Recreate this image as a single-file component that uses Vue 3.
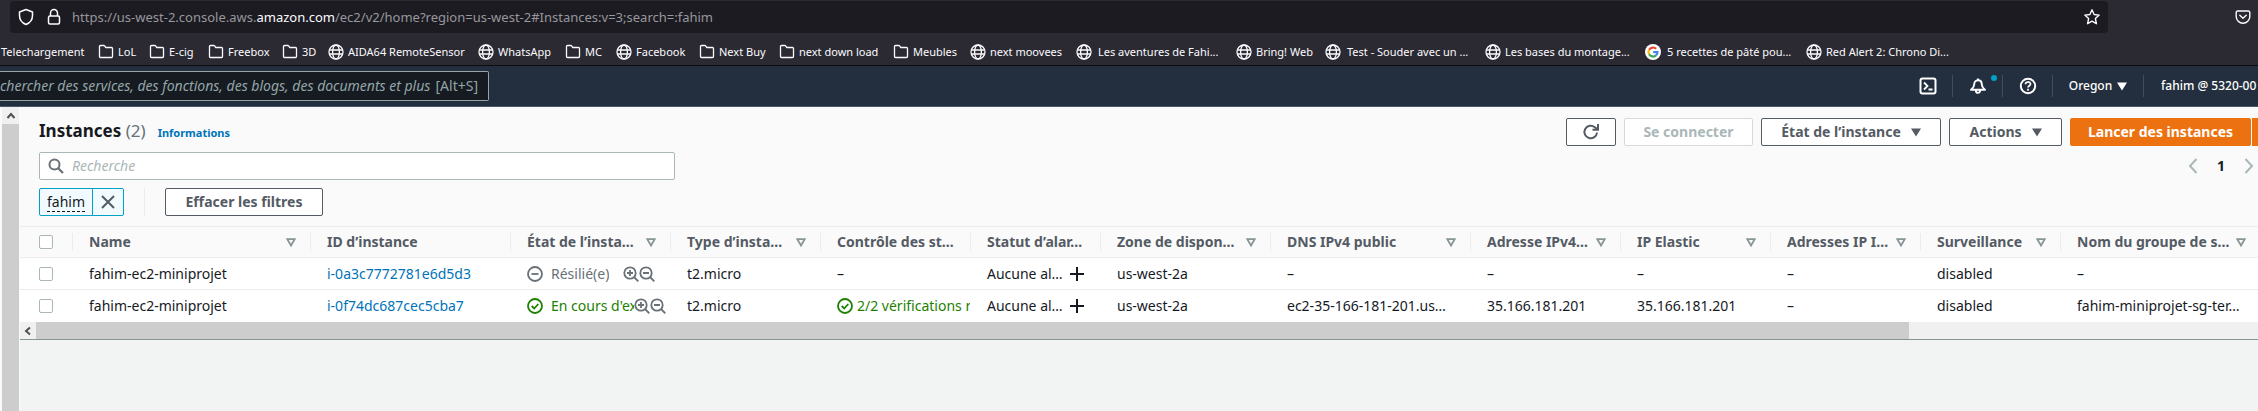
<script setup>
import { ref } from 'vue'

const bookmarks = [
  { label: 'Telechargement', icon: 'none', width: 97 },
  { label: 'LoL', icon: 'folder', width: 51 },
  { label: 'E-cig', icon: 'folder', width: 59 },
  { label: 'Freebox', icon: 'folder', width: 74 },
  { label: '3D', icon: 'folder', width: 46 },
  { label: 'AIDA64 RemoteSensor', icon: 'globe', width: 150 },
  { label: 'WhatsApp', icon: 'globe', width: 87 },
  { label: 'MC', icon: 'folder', width: 51 },
  { label: 'Facebook', icon: 'globe', width: 83 },
  { label: 'Next Buy', icon: 'folder', width: 80 },
  { label: 'next down load', icon: 'folder', width: 114 },
  { label: 'Meubles', icon: 'folder', width: 77 },
  { label: 'next moovees', icon: 'globe', width: 106 },
  { label: 'Les aventures de Fahi...', icon: 'globe', width: 160, wide: true },
  { label: 'Bring! Web', icon: 'globe', width: 89 },
  { label: 'Test - Souder avec un ...', icon: 'globe', width: 160, wide: true },
  { label: 'Les bases du montage...', icon: 'globe', width: 160 },
  { label: '5 recettes de pâté pou...', icon: 'google', width: 161, wide: true },
  { label: 'Red Alert 2: Chrono Di...', icon: 'globe', width: 160 }
]

const columns = [
  { label: 'Name', width: 238, sort: true },
  { label: 'ID d’instance', width: 200 },
  { label: 'État de l’insta…', width: 160, sort: true },
  { label: 'Type d’insta…', width: 150, sort: true },
  { label: 'Contrôle des st…', width: 150 },
  { label: 'Statut d’alar…', width: 130 },
  { label: 'Zone de dispon…', width: 170, sort: true },
  { label: 'DNS IPv4 public', width: 200, sort: true },
  { label: 'Adresse IPv4…', width: 150, sort: true },
  { label: 'IP Elastic', width: 150, sort: true },
  { label: 'Adresses IP I…', width: 150, sort: true },
  { label: 'Surveillance', width: 140, sort: true },
  { label: 'Nom du groupe de s…', width: 200, sort: true }
]

const rows = [
  {
    name: 'fahim-ec2-miniprojet', id: 'i-0a3c7772781e6d5d3', state: 'Résilié(e)', running: false,
    type: 't2.micro', checks: '', zone: 'us-west-2a',
    rest: ['–', '–', '–', '–', 'disabled', '–']
  },
  {
    name: 'fahim-ec2-miniprojet', id: 'i-0f74dc687cec5cba7', state: "En cours d'exé", running: true,
    type: 't2.micro', checks: '2/2 vérifications ré', zone: 'us-west-2a',
    rest: ['ec2-35-166-181-201.us…', '35.166.181.201', '35.166.181.201', '–', 'disabled', 'fahim-miniprojet-sg-ter…']
  }
]

const selected = ref([])
const query = ref('')
const serviceQuery = ref('')
</script>

<template>
  <div class="page">
    <div class="toolbar">
      <div class="urlbar">
        <svg class="i18" viewBox="0 0 18 18"><path d="M9 1.500 15.500 4v3.500c0 4-2.300 7.300-6.500 9-4.200-1.700-6.500-5-6.500-9V4z" fill="none" stroke="#fbfbfe" stroke-width="1.500" stroke-linejoin="round" /></svg>
        <svg class="i18 lock" viewBox="0 0 18 18"><path d="M5.500 8V5a3.500 3.500 0 0 1 7 0v3" fill="none" stroke="#fbfbfe" stroke-width="1.500" /><rect x="3.500" y="8" width="11" height="8" rx="1.500" fill="none" stroke="#fbfbfe" stroke-width="1.500" /></svg>
        <span class="url">https://us-west-2.console.aws.<b>amazon.com</b>/ec2/v2/home?region=us-west-2#Instances:v=3;search=:fahim</span>
        <svg class="i18 star" viewBox="0 0 18 18"><path d="m9 1.800 2.100 4.700 5.100.6-3.800 3.500 1 5.100L9 13.200l-4.400 2.500 1-5.100L1.800 7.100l5.100-.6z" fill="none" stroke="#fbfbfe" stroke-width="1.400" stroke-linejoin="round" /></svg>
      </div>
      <svg class="pocket" viewBox="0 0 16 16"><path d="M2.500 2h11A1.300 1.300 0 0 1 14.800 3.300V7.500a6.800 6.800 0 0 1-13.600 0V3.300A1.300 1.300 0 0 1 2.500 2zM4.800 6.200 8 9.300l3.200-3.100" fill="none" stroke="#fbfbfe" stroke-width="1.400" stroke-linecap="round" stroke-linejoin="round" /></svg>
    </div>

    <nav class="bookmarks" aria-label="Marque-pages">
      <a v-for="b in bookmarks" :key="b.label" href="#" class="bookmark" :class="{ wide: b.wide }" :style="{ width: b.width + 'px' }">
        <svg v-if="b.icon === 'folder'" class="i16" viewBox="0 0 16 16"><path d="M1.500 2.500a1 1 0 0 1 1-1h3.300a1 1 0 0 1 .8.400L7.800 3.500h5.700a1 1 0 0 1 1 1v8a1 1 0 0 1-1 1h-11a1 1 0 0 1-1-1z" fill="none" stroke="#fbfbfe" stroke-width="1.300" /></svg>
        <svg v-else-if="b.icon === 'globe'" class="i16" viewBox="0 0 16 16"><g fill="none" stroke="#fbfbfe" stroke-width="1.300"><circle cx="8" cy="8" r="7" /><ellipse cx="8" cy="8" rx="3.400" ry="7" /><path d="M1.300 6h13.400M1.300 10h13.400" /></g></svg>
        <svg v-else-if="b.icon === 'google'" class="i16" viewBox="0 0 16 16"><circle cx="8" cy="8" r="8" fill="#fff" /><g fill="none" stroke-width="2.200"><path d="M11.200 4.800A4.500 4.500 0 0 0 4.100 5.800" stroke="#ea4335" /><path d="M4.100 5.800a4.500 4.500 0 0 0 0 4.400" stroke="#fbbc05" /><path d="M4.100 10.200a4.500 4.500 0 0 0 6.900 1.200" stroke="#34a853" /><path d="M11 11.400A4.500 4.500 0 0 0 12.500 8.200H8.200" stroke="#4285f4" /></g></svg>
        <span>{{ b.label }}</span>
      </a>
    </nav>

    <header class="aws">
      <label class="services">
        <input v-model="serviceQuery" type="text" aria-label="Rechercher des services" placeholder="chercher des services, des fonctions, des blogs, des documents et plus" />
        <span>[Alt+S]</span>
      </label>
      <div class="tools">
        <button class="tool" aria-label="CloudShell">
          <svg class="i18" viewBox="0 0 18 18"><rect x="1.500" y="1.500" width="15" height="15" rx="2" fill="none" stroke="#fff" stroke-width="2" /><path d="m5 5.500 3.500 3.500L5 12.500M9.500 12.500h4" fill="none" stroke="#fff" stroke-width="1.800" /></svg>
        </button>
        <button class="tool" aria-label="Notifications">
          <svg class="i18" viewBox="0 0 18 18"><path d="M9 1.500v2M9 3.200c-2.600 0-3.800 2-3.800 4.300 0 2.500-1.500 3.700-3.200 5.300h14c-1.700-1.600-3.200-2.800-3.200-5.300C12.800 5.200 11.600 3.200 9 3.200zM6.800 13.200a2.200 2.700 0 0 0 4.400 0" fill="none" stroke="#fff" stroke-width="1.900" stroke-linejoin="round" /></svg>
          <i class="dot"></i>
        </button>
        <button class="tool" aria-label="Aide">
          <svg class="i18" viewBox="0 0 18 18"><g fill="none" stroke="#fff" stroke-width="2"><circle cx="9" cy="9" r="7.200" /><path d="M6.500 7.300C6.500 4.200 11.500 4.300 11.500 7c0 1.700-2.500 1.700-2.500 3.600M9 11.800v1.900" stroke-width="1.700" /></g></svg>
        </button>
        <button class="tool region">Oregon <svg class="caret" viewBox="0 0 10 8"><path d="M0 0h10L5 8z" fill="currentColor" /></svg></button>
        <button class="tool account">fahim @ 5320-00</button>
      </div>
    </header>

    <div class="body">
      <div class="vscroll"><span class="arrow"><svg viewBox="0 0 10 10"><path d="m1.500 7 3.500-4 3.500 4" fill="none" stroke="#505050" stroke-width="2" /></svg></span></div>
      <main>
        <section class="panel">
          <div class="head">
            <h1>Instances <span>(2)</span></h1>
            <a href="#" class="info">Informations</a>
            <div class="actions">
              <button class="btn refresh" aria-label="Actualiser"><svg class="i18" viewBox="0 0 18 18"><path d="M15 9.500A6.300 6.300 0 1 1 12.800 4.200L15.800 6.300M16 1v5.700h-5.500" fill="none" stroke="#545b64" stroke-width="2" /></svg></button>
              <button class="btn connect" disabled>Se connecter</button>
              <button class="btn state">État de l’instance <svg class="caret" viewBox="0 0 10 8"><path d="M0 0h10L5 8z" fill="currentColor" /></svg></button>
              <button class="btn act">Actions <svg class="caret" viewBox="0 0 10 8"><path d="M0 0h10L5 8z" fill="currentColor" /></svg></button>
              <div class="split">
                <button class="btn primary">Lancer des instances</button>
                <button class="btn primary more" aria-label="Plus"></button>
              </div>
            </div>
          </div>
          <div class="filter">
            <label class="search">
              <svg class="i16" viewBox="0 0 16 16"><circle cx="6.500" cy="6.500" r="5" fill="none" stroke="#687078" stroke-width="2" /><path d="m10 10 5 5" stroke="#687078" stroke-width="2.200" /></svg>
              <input v-model="query" type="text" aria-label="Recherche" placeholder="Recherche" />
            </label>
            <div class="pages">
              <button aria-label="Page précédente"><svg viewBox="0 0 10 16"><path d="M8.500 1 2 8l6.500 7" fill="none" stroke="#aab7b8" stroke-width="2" /></svg></button>
              <button class="current">1</button>
              <button aria-label="Page suivante"><svg viewBox="0 0 10 16"><path d="M1.500 1 8 8l-6.500 7" fill="none" stroke="#aab7b8" stroke-width="2" /></svg></button>
            </div>
          </div>
          <div class="tokens">
            <div class="token">
              <span><u>fahim</u></span>
              <button aria-label="Retirer fahim"><svg viewBox="0 0 14 14"><path d="m1 1 12 12M13 1 1 13" stroke="#545b64" stroke-width="2" /></svg></button>
            </div>
            <button class="btn clear">Effacer les filtres</button>
          </div>

          <div class="scroller">
            <table>
              <colgroup>
                <col class="check-col" />
                <col v-for="c in columns" :key="c.label" :style="{ width: c.width + 'px' }" />
              </colgroup>
              <thead>
                <tr>
                  <th class="check"><input type="checkbox" aria-label="Tout sélectionner" /></th>
                  <th v-for="c in columns" :key="c.label">
                    <div class="th"><span>{{ c.label }}</span><svg v-if="c.sort" viewBox="0 0 10 9"><path d="M1.300 1.200h7.400L5 7.500z" fill="none" stroke="#879596" stroke-width="1.800" /></svg></div>
                  </th>
                </tr>
              </thead>
              <tbody>
                <tr v-for="r in rows" :key="r.id">
                  <td class="check"><input v-model="selected" type="checkbox" :value="r.id" :aria-label="r.id" /></td>
                  <td>{{ r.name }}</td>
                  <td><a href="#">{{ r.id }}</a></td>
                  <td class="tight">
                    <div class="status" :class="{ ok: r.running }">
                      <svg class="i16" viewBox="0 0 16 16"><g fill="none" stroke="currentColor" stroke-width="1.800"><circle cx="8" cy="8" r="7" /><path :d="r.running ? 'm4.700 8 2.500 2.500L11.300 6' : 'M4.500 8h7'" /></g></svg>
                      <span class="label">{{ r.state }}</span>
                      <span class="zooms">
                        <button aria-label="Inclure"><svg class="i16" viewBox="0 0 16 16"><g fill="none" stroke="#687078" stroke-width="1.800"><circle cx="7" cy="7" r="5.700" /><path d="m11 11 4.300 4.300M4 7h6M7 4v6" /></g></svg></button>
                        <button aria-label="Exclure"><svg class="i16" viewBox="0 0 16 16"><g fill="none" stroke="#687078" stroke-width="1.800"><circle cx="7" cy="7" r="5.700" /><path d="m11 11 4.300 4.300M4 7h6" /></g></svg></button>
                      </span>
                    </div>
                  </td>
                  <td>{{ r.type }}</td>
                  <td class="flush">
                    <div v-if="r.checks" class="status ok near">
                      <svg class="i16" viewBox="0 0 16 16"><g fill="none" stroke="currentColor" stroke-width="1.800"><circle cx="8" cy="8" r="7" /><path d="m4.700 8 2.500 2.500L11.300 6" /></g></svg>
                      <span class="label">{{ r.checks }}</span>
                    </div>
                    <template v-else>–</template>
                  </td>
                  <td>
                    <div class="alarm"><span>Aucune al…</span><button aria-label="Ajouter une alarme"><svg viewBox="0 0 14 14"><path d="M7 0v14M0 7h14" stroke="#16191f" stroke-width="2" /></svg></button></div>
                  </td>
                  <td>{{ r.zone }}</td>
                  <td v-for="(v, i) in r.rest" :key="i">{{ v }}</td>
                </tr>
              </tbody>
            </table>
          </div>
          <div class="hscroll">
            <span class="arrow"><svg viewBox="0 0 10 10"><path d="M7 1.500 3 5l4 3.500" fill="none" stroke="#505050" stroke-width="2" /></svg></span>
            <span class="thumb"></span>
            <span class="track"></span>
          </div>
        </section>
      </main>
    </div>
  </div>
</template>

<style>
body { margin: 0; }
</style>

<style scoped>
* { box-sizing: border-box; }
.page {
  display: flex; flex-direction: column; min-height: 100vh; overflow: hidden;
  background: #f2f3f3; color: #16191f; font: 14px/22px "Noto Sans", "Open Sans", sans-serif;
}
button, input { font: inherit; }
button { display: flex; align-items: center; margin: 0; padding: 0; border: 0; background: none; color: inherit; white-space: nowrap; cursor: pointer; }
a { color: #0073bb; text-decoration: none; }
svg { display: block; flex: none; }
.i16 { width: 16px; height: 16px; }
.i18 { width: 18px; height: 18px; }
.caret { width: 10px; height: 9px; }

.toolbar { display: flex; align-items: center; gap: 127px; padding: 1px 7px 1px 10px; background: #2b2a33; }
.urlbar { display: flex; align-items: center; flex: 1; height: 32px; padding: 0 7px; border-radius: 4px; background: #1c1b22; }
.lock { margin-left: 10px; }
.url { margin-left: 9px; color: #97979c; font: 13px/20px "Noto Sans", "Open Sans", sans-serif; white-space: nowrap; }
.url b { color: #fbfbfe; font-weight: 400; }
.star { margin-left: auto; }
.pocket { width: 16px; height: 16px; }

.bookmarks { display: flex; align-items: center; height: 32px; padding: 4px 0 0 1px; border-bottom: 1px solid #0c0c0d; background: #2b2a33; }
.bookmark { display: flex; align-items: center; flex: none; gap: 4px; color: #fbfbfe; font: 11px/16px "Noto Sans", "Open Sans", sans-serif; white-space: nowrap; }
.bookmark.wide { gap: 6px; }

.aws { display: flex; align-items: center; justify-content: space-between; height: 41px; border-bottom: 1px solid #4b5866; background: #232f3e; }
.services { display: flex; align-items: center; width: 489px; height: 30px; padding-right: 10px; border: 1px solid #95a5a6; border-left: 0; border-radius: 0 2px 2px 0; background: #161b22; color: #95a5a6; }
.services input { flex: 1; min-width: 0; padding: 0; border: 0; outline: 0; background: none; color: #fff; font-style: italic; }
.services input::placeholder { color: #95a5a6; opacity: 1; }
.tools { display: flex; align-items: center; }
.tool { position: relative; justify-content: center; width: 50px; height: 22px; border-left: 1px solid #414d5c; color: #fff; font-size: 12px; font-weight: 500; }
.tool:first-child { border-left-color: transparent; }
.dot { position: absolute; top: 0; right: 5px; width: 6px; height: 6px; border-radius: 50%; background: #00a1c9; }
.region { gap: 5px; width: 91px; }
.account { justify-content: flex-start; width: 115px; padding-left: 17px; }

.body { display: flex; flex: 1; }
.vscroll { flex: none; width: 20px; border: solid #fafafa; border-width: 0 1px 0 2px; background: #cdcdcd; }
.arrow { display: flex; align-items: center; justify-content: center; flex: none; width: 17px; height: 17px; background: #f0f0f0; }
.arrow svg { width: 10px; height: 10px; }
main { flex: 1; min-width: 0; }
.panel { border-bottom: 1px solid #879596; background: #fafafa; }
.head { display: flex; align-items: center; padding: 11px 0 6px 19px; }
h1 { margin: 0 0 2px; font-size: 17px; line-height: 26px; font-weight: 700; }
h1 span { color: #687078; font-weight: 400; }
.info { margin-left: 12px; padding-top: 1px; font-size: 11px; line-height: 20px; font-weight: 700; }
.actions { display: flex; gap: 8px; margin-left: auto; }
.btn { justify-content: center; height: 28px; padding: 0 16px; border: 1px solid #545b64; border-radius: 2px; background: #fff; color: #545b64; font-weight: 700; }
.btn:disabled { border-color: #d5dbdb; color: #aab7b8; }
.refresh { width: 50px; padding: 0; }
.connect { width: 129px; }
.state { gap: 10px; width: 180px; }
.act { gap: 10px; width: 113px; }
.split { display: flex; gap: 1px; }
.primary { width: 181px; border-color: #ec7211; background: #ec7211; color: #fff; }
.primary.more { width: 6px; padding: 0; border-radius: 0; }

.filter { display: flex; align-items: center; justify-content: space-between; padding: 0 4px 0 19px; }
.search { display: flex; align-items: center; gap: 8px; width: 636px; height: 28px; padding: 0 8px; border: 1px solid #aab7b8; border-radius: 2px; background: #fff; }
.search input { flex: 1; min-width: 0; padding: 0; border: 0; outline: 0; background: none; }
.search input::placeholder { color: #aab7b8; font-style: italic; opacity: 1; }
.pages { display: flex; align-items: center; gap: 19px; }
.pages svg { width: 10px; height: 16px; }
.current { font-weight: 700; }

.tokens { display: flex; align-items: center; padding: 8px 0 10px 19px; }
.token { display: flex; width: 85px; height: 28px; border: 1px solid #00a1c9; border-radius: 2px; background: #f1faff; }
.token span { display: flex; align-items: center; justify-content: center; flex: 1; border-right: 1px solid #00a1c9; }
.token u { line-height: 19px; border-bottom: 1px dashed #16191f; text-decoration: none; }
.token button { justify-content: center; width: 30px; }
.token svg { width: 14px; height: 14px; }
.clear { position: relative; width: 158px; margin-left: 41px; }
.clear::before { content: ""; position: absolute; left: -22px; top: -1px; height: 28px; border-left: 1px solid #eaeded; }

.scroller { overflow: hidden; border-top: 1px solid #eaeded; }
table { width: 2240px; table-layout: fixed; border-collapse: separate; border-spacing: 0; background: #fff; }
.check-col { width: 52px; }
th, td { height: 32px; padding: 0 12px 0 17px; overflow: hidden; text-align: left; white-space: nowrap; }
th { height: 31px; border-bottom: 1px solid #eaeded; background: #fafafa; color: #545b64; font-weight: 700; }
th:not(.check) { padding: 0 14px 0 0; }
tbody tr:first-child td { border-bottom: 1px solid #eaeded; }
.th { display: flex; align-items: center; justify-content: space-between; height: 18px; padding-left: 16px; border-left: 1px solid #eaeded; }
.th svg { width: 10px; height: 9px; }
.check { padding: 0 0 0 19px; }
.check input { display: block; width: 14px; height: 14px; margin: 0; appearance: none; border: 1px solid #aab7b8; border-radius: 2px; background: #fff; }
.check input:checked { background: #00a1c9; }
td.tight { padding-right: 4px; }
td.flush { padding-right: 0; }
.status { display: flex; align-items: center; gap: 8px; color: #687078; }
.status.ok { color: #1d8102; }
.status.near { gap: 4px; }
.label { overflow: hidden; }
.zooms { display: flex; flex: none; margin-left: 6px; }
.ok .zooms { margin-left: -8px; }
.alarm { display: flex; align-items: center; justify-content: space-between; margin-right: 4px; }
.alarm svg { width: 14px; height: 14px; }

.hscroll { display: flex; height: 17px; background: #f0f0f0; }
.hscroll .arrow { width: 16px; }
.thumb { flex: 1873; background: #cdcdcd; }
.track { flex: 349; }
</style>
